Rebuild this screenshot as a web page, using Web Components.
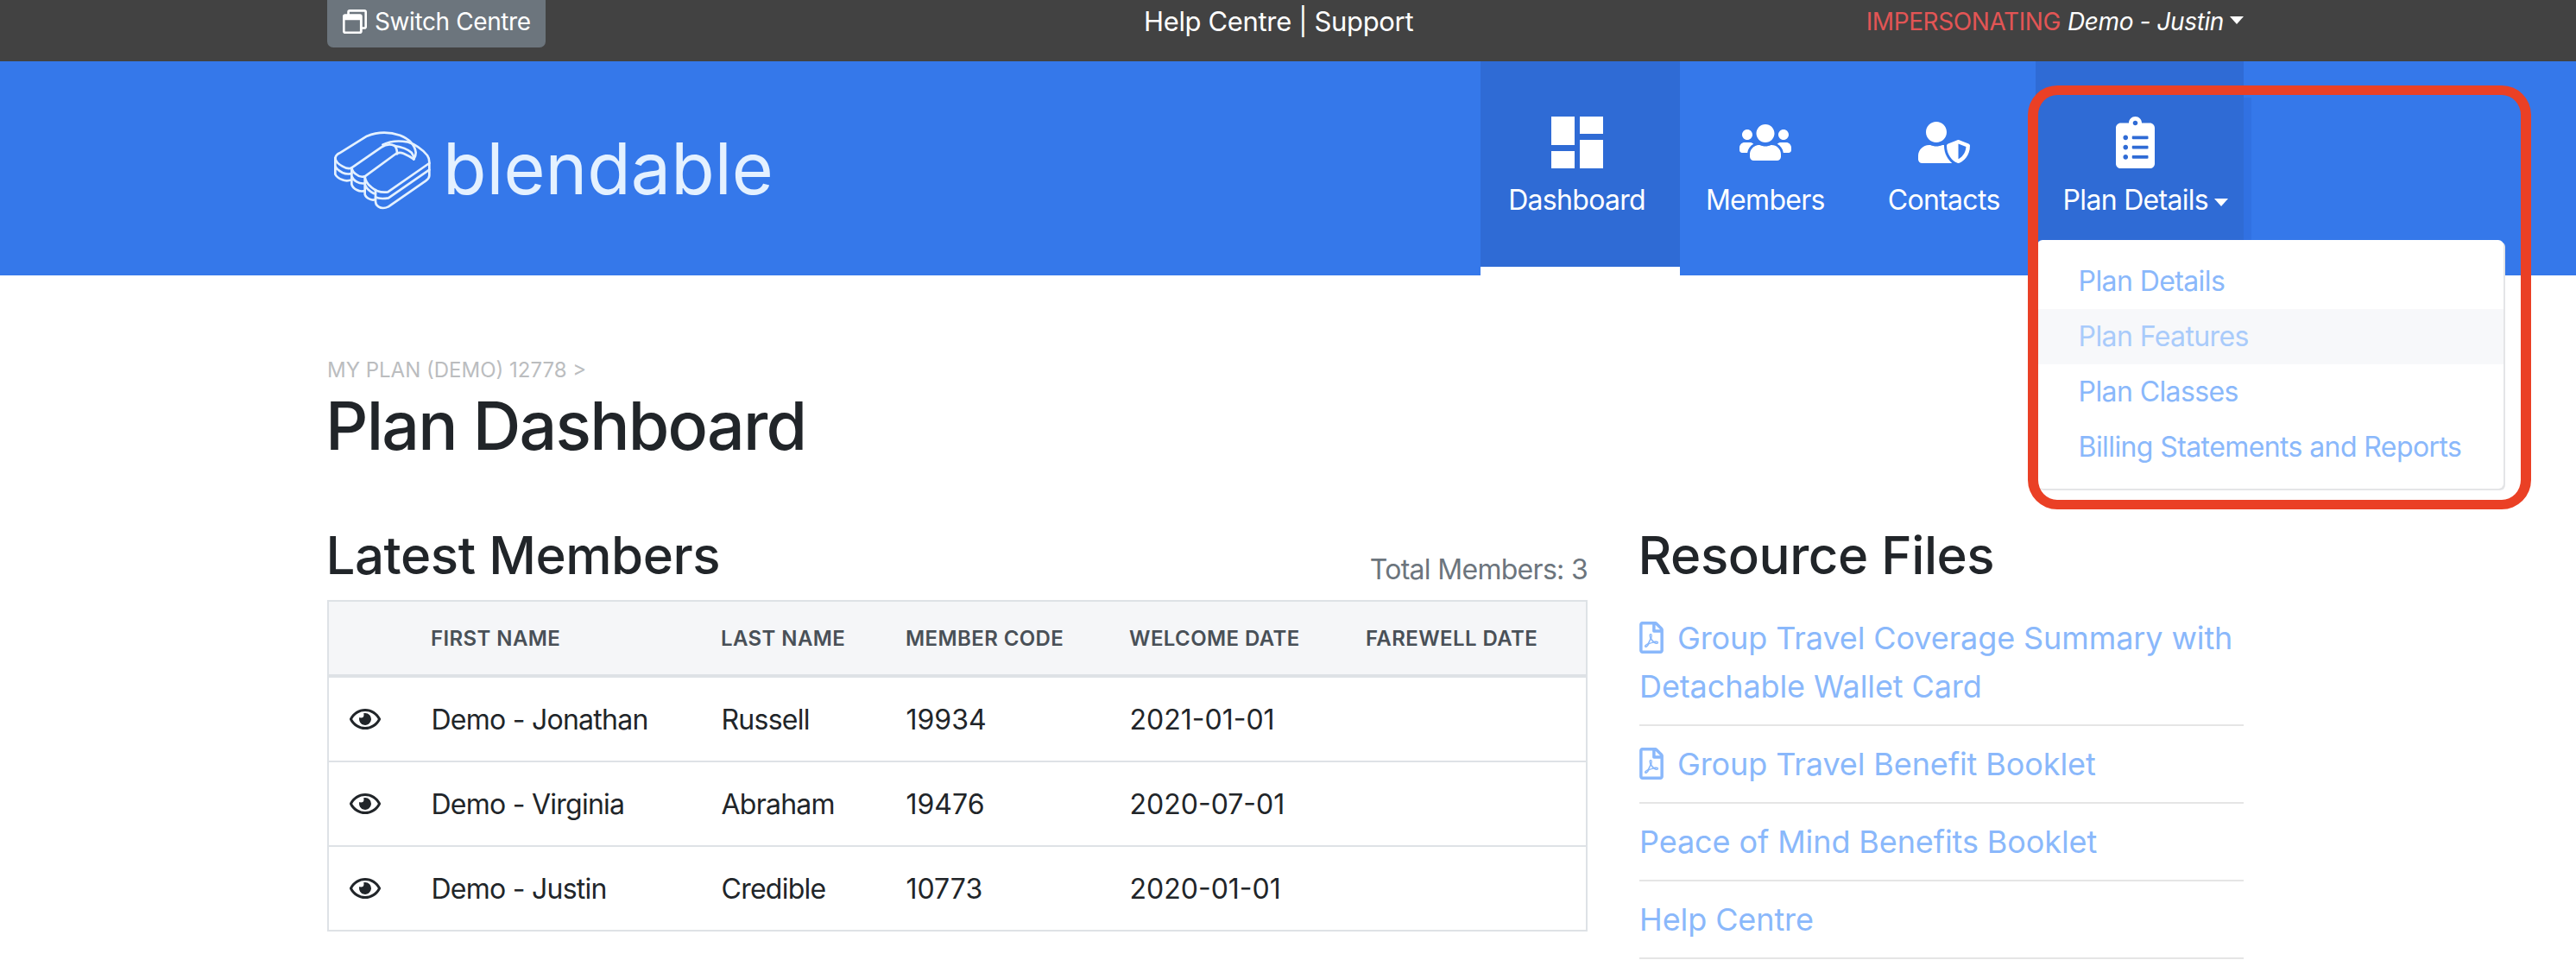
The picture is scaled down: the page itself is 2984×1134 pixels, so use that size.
<!DOCTYPE html>
<html lang="en"><head><meta charset="utf-8"><title>Plan Dashboard</title>
<style>
html,body{margin:0;padding:0;background:#fff}
body{font-family:Inter,"Liberation Sans",sans-serif;font-size:32px;color:#212529;width:2984px;height:1134px;overflow:hidden;position:relative}
</style></head><body>
<app-page>
  <top-bar>
    <switch-button slot="left">Switch Centre</switch-button>
    <span slot="mid">Help Centre | Support</span>
    <user-menu slot="right"></user-menu>
  </top-bar>
  <site-header>
    <brand-logo slot="logo"></brand-logo>
    <nav-item slot="nav" icon="dash" active style="--pl:32px;--pr:40px">Dashboard</nav-item>
    <nav-item slot="nav" icon="users" style="--pl:30px;--pr:32px">Members</nav-item>
    <nav-item slot="nav" icon="usershield" style="--pl:41px;--pr:41px">Contacts</nav-item>
    <nav-item slot="nav" icon="clip" open caret style="--pl:32px;--pr:41px">Plan Details
      <drop-menu slot="menu">
        <drop-item>Plan Details</drop-item>
        <drop-item hover>Plan Features</drop-item>
        <drop-item>Plan Classes</drop-item>
        <drop-item>Billing Statements and Reports</drop-item>
      </drop-menu>
    </nav-item>
  </site-header>
  <page-body>
    <page-title crumb="MY PLAN (DEMO) 12778 &gt;">Plan Dashboard</page-title>
    <two-cols>
      <section-block slot="a" total="Total Members: 3" heading="Latest Members">
        <member-table></member-table>
      </section-block>
      <section-block slot="b" heading="Resource Files">
        <file-item pdf>Group Travel Coverage Summary with Detachable Wallet Card</file-item>
        <file-item pdf>Group Travel Benefit Booklet</file-item>
        <file-item>Peace of Mind Benefits Booklet</file-item>
        <file-item>Help Centre</file-item>
      </section-block>
    </two-cols>
  </page-body>
  <note-ring></note-ring>
</app-page>
<script>
const ICONS={
 pdf:['0 0 384 512','M369.9 97.9L286 14C277 5 264.8-.1 252.1-.1H48C21.5 0 0 21.5 0 48v416c0 26.5 21.5 48 48 48h288c26.5 0 48-21.5 48-48V131.9c0-12.7-5.1-25-14.1-34zM332.1 128H256V51.9l76.1 76.1zM48 464V48h160v104c0 13.3 10.7 24 24 24h104v288H48zm250.2-143.7c-12.2-12-47-8.7-64.4-6.5-17.2-10.5-28.7-25-36.8-46.3 3.9-16.1 10.1-40.6 5.4-56-4.2-26.2-37.8-23.6-42.6-5.9-4.4 16.1-.4 38.5 7 67.1-10 23.9-24.9 56-35.4 74.4-20 10.3-47 26.2-51 46.2-3.3 15.8 26 55.2 76.1-31.2 22.4-7.4 46.8-16.5 68.4-20.1 18.9 10.2 41 17 55.8 17 25.5 0 28-28.2 17.5-38.7zm-198.1 77.8c5.1-13.7 24.5-29.5 30.4-35-19 30.3-30.4 35.7-30.4 35zm81.6-190.6c7.4 0 6.7 32.1 1.8 40.8-4.4-13.9-4.3-40.8-1.8-40.8zm-24.4 136.6c9.7-16.9 18-37 24.7-54.7 8.3 15.1 18.9 27.2 30.1 35.5-20.8 4.3-38.9 13.1-54.8 19.2zm131.6-5s-5 6-37.3-7.8c35.1-2.6 40.9 5.4 37.3 7.8z'],
 users:['0 0 640 512','M96 224c35.3 0 64-28.7 64-64s-28.7-64-64-64-64 28.7-64 64 28.7 64 64 64zm448 0c35.3 0 64-28.7 64-64s-28.7-64-64-64-64 28.7-64 64 28.7 64 64 64zm32 32h-64c-17.6 0-33.5 7.1-45.1 18.6 40.3 22.1 68.9 62 75.1 109.4h66c17.7 0 32-14.3 32-32v-32c0-35.3-28.7-64-64-64zm-256 0c61.9 0 112-50.1 112-112S381.9 32 320 32 208 82.1 208 144s50.1 112 112 112zm76.8 32h-8.3c-20.8 10-43.9 16-68.5 16s-47.6-6-68.5-16h-8.3C179.6 288 128 339.6 128 403.2V432c0 26.5 21.5 48 48 48h288c26.5 0 48-21.5 48-48v-28.8c0-63.6-51.6-115.2-115.2-115.2zm-223.7-13.4C161.5 263.1 145.6 256 128 256H64c-35.3 0-64 28.7-64 64v32c0 17.7 14.3 32 32 32h65.9c6.3-47.4 34.9-87.3 75.2-109.4z'],
 usershield:['0 0 640 512','M622.3 271.1l-115.2-45c-4.1-1.6-12.6-3.7-22.2 0l-115.2 45c-10.7 4.2-17.7 14-17.7 24.9 0 111.6 68.7 188.8 132.9 213.9 9.6 3.7 18 1.6 22.2 0C558.4 489.9 640 420.5 640 296c0-10.9-7-20.7-17.7-24.9zM496 462.4V273.3l95.5 37.3c-5.6 87.1-60.9 135.4-95.5 151.8zM224 256c70.7 0 128-57.3 128-128S294.7 0 224 0 96 57.3 96 128s57.3 128 128 128zm96 40c0-2.5.8-4.7 1.1-7.2-2.5-.1-4.9-.8-7.5-.8h-16.7c-22.2 10.2-46.9 16-72.9 16s-50.6-5.8-72.9-16h-16.7C60.2 288 0 348.2 0 422.4V464c0 26.5 21.5 48 48 48h352c6.2 0 12.1-1.3 17.5-3.4C369.9 470.3 320 393.6 320 296z'],
 clip:['0 0 384 512','M336 64h-80c0-35.3-28.7-64-64-64s-64 28.7-64 64H48C21.5 64 0 85.5 0 112v352c0 26.5 21.5 48 48 48h288c26.5 0 48-21.5 48-48V112c0-26.5-21.5-48-48-48zM96 424c-13.3 0-24-10.7-24-24s10.7-24 24-24 24 10.7 24 24-10.7 24-24 24zm0-96c-13.3 0-24-10.7-24-24s10.7-24 24-24 24 10.7 24 24-10.7 24-24 24zm0-96c-13.3 0-24-10.7-24-24s10.7-24 24-24 24 10.7 24 24-10.7 24-24 24zm96-192c13.3 0 24 10.7 24 24s-10.7 24-24 24-24-10.7-24-24 10.7-24 24-24zm128 368c0 4.4-3.6 8-8 8H168c-4.4 0-8-3.6-8-8v-16c0-4.4 3.6-8 8-8h144c4.4 0 8 3.6 8 8v16zm0-96c0 4.4-3.6 8-8 8H168c-4.4 0-8-3.6-8-8v-16c0-4.4 3.6-8 8-8h144c4.4 0 8 3.6 8 8v16zm0-96c0 4.4-3.6 8-8 8H168c-4.4 0-8-3.6-8-8v-16c0-4.4 3.6-8 8-8h144c4.4 0 8 3.6 8 8v16z'],
 dash:['0 0 60 60','M0 0h27v33H0zM33 0h27v20H33zM33 27h27v33H33zM0 40h27v20H0z'],
 eye:['0 0 576 512','M288 144a110.94 110.94 0 0 0-31.24 5 55.4 55.4 0 0 1 7.24 27 56 56 0 0 1-56 56 55.4 55.4 0 0 1-27-7.24A111.71 111.71 0 1 0 288 144zm284.52 97.4C518.29 135.59 410.93 64 288 64S57.68 135.64 3.48 241.41a32.35 32.35 0 0 0 0 29.19C57.71 376.41 165.07 448 288 448s230.32-71.64 284.52-177.41a32.35 32.35 0 0 0 0-29.19zM288 400c-98.65 0-189.09-55-237.93-144C98.91 167 189.34 112 288 112s189.09 55 237.93 144C477.1 345 386.66 400 288 400z'],
 win:['0 0 512 512','M464 0H144c-26.5 0-48 21.5-48 48v48H48c-26.5 0-48 21.5-48 48v320c0 26.5 21.5 48 48 48h320c26.5 0 48-21.5 48-48v-48h48c26.5 0 48-21.5 48-48V48c0-26.5-21.5-48-48-48zM362 464H54c-3.3 0-6-2.7-6-6V224h316v234c0 3.3-2.7 6-6 6zm102-96h-48V144c0-26.5-21.5-48-48-48H144V54c0-3.3 2.7-6 6-6h308c3.3 0 6 2.7 6 6v314z']
};
function svg(n,w,h,extra=''){const [v,d]=ICONS[n];return `<svg xmlns="http://www.w3.org/2000/svg" width="${w}" height="${h}" viewBox="${v}" fill="currentColor" style="display:block;${extra}"><path d="${d}"/></svg>`}
function def(name,html){customElements.define(name,class extends HTMLElement{constructor(){super();this.attachShadow({mode:'open'});if(typeof html!=='function')this.shadowRoot.innerHTML=html}
 connectedCallback(){if(typeof html==='function')this.shadowRoot.innerHTML=html(this)}})}

def('app-page',`<style>:host{display:block;position:relative;width:2984px;height:1134px;overflow:hidden}</style><slot></slot>`);

def('top-bar',`<style>
:host{display:block;background:#424242;height:71px;color:#fff}
.c{display:grid;grid-template-columns:946px 312px 1fr;margin-left:379px;width:2220px;height:71px}
.m{display:block;line-height:50px;white-space:nowrap;font-size:31px;letter-spacing:-.35px}
.r{justify-self:end}
</style><div class="c"><div><slot name="left"></slot></div><div class="m"><slot name="mid"></slot></div><div class="r"><slot name="right"></slot></div></div>`);

def('switch-button',`<style>
:host{display:inline-flex;align-items:center;gap:9px;box-sizing:border-box;width:253px;height:55px;padding:0 0 5px 18px;background:#6c757d;color:#fff;border-radius:0 0 7px 7px;font-size:28px;letter-spacing:-.4px;white-space:nowrap}
</style>${svg('win',28,28)}<span><slot></slot></span>`);

def('user-menu',`<style>
:host{display:flex;align-items:center;height:50px;font-size:28px;letter-spacing:-.4px;white-space:nowrap;color:#fff}
.i{color:#e25555}
em{font-style:italic;margin-left:8px}
.car{width:0;height:0;border:8px solid transparent;border-top:9px solid #fff;border-bottom:0;margin-left:7px;margin-top:-4px}
</style><span class="i">IMPERSONATING</span><em>Demo - Justin</em><span class="car"></span>`);

def('site-header',`<style>
:host{display:block;background:#3578ea;height:248px}
.c{display:flex;justify-content:space-between;margin-left:379px;width:2220px;height:248px}
nav{display:flex;align-items:stretch}
</style><div class="c"><slot name="logo"></slot><nav><slot name="nav"></slot></nav></div>`);

def('brand-logo',`<style>
:host{display:flex;align-items:flex-start;padding-top:74px;color:#e4f1ff}
svg{margin-left:1px;display:block;overflow:visible;flex:none}
span{font-size:82.5px;font-weight:400;line-height:100px;margin-left:3px}
</style>
<svg width="130" height="105" viewBox="0 0 390 315" fill="none" stroke="currentColor" stroke-width="8" stroke-linecap="round" stroke-linejoin="round">
<path d="M25 115Q27 103 40 97L135 38Q190 15 250 35Q300 55 305 95Q305 108 298 118"/>
<path d="M190 68Q225 50 275 58Q315 70 345 105Q352 115 352 128V175Q352 185 340 193L210 283Q190 293 175 283Q165 277 165 265V225"/>
<path d="M25 115Q27 130 50 143Q70 155 82 148L185 77Q210 60 232 72Q240 80 240 100"/>
<path d="M232 72Q270 78 290 95Q298 105 298 118"/>
<path d="M82 148Q85 165 100 172Q110 182 128 178L232 102Q245 92 262 98Q285 108 298 118"/>
<path d="M128 178Q130 200 150 215Q175 237 208 232L352 132"/>
<path d="M165 250Q180 258 210 253L352 155"/>
<path d="M25 115V170Q30 182 50 190Q65 196 82 190M25 142Q30 155 50 165Q65 172 82 168"/>
<path d="M82 148V205Q85 218 100 225Q112 232 128 228M82 175Q85 188 100 197Q112 204 128 202"/>
<path d="M128 178V240Q130 250 145 257Q155 262 165 258M128 205Q132 220 150 232Q158 238 165 238"/>
</svg><span>blendable</span>`);

def('nav-item',h=>{const open=h.hasAttribute('open'),act=h.hasAttribute('active');
 const n=h.getAttribute('icon');const size={dash:[60,60],users:[60,48],usershield:[60,48],clip:[45,60]}[n];
 return `<style>
:host{display:block;position:relative;box-sizing:border-box;padding:0 var(--pr) 0 var(--pl);color:#fff;${act?'background:#2f6bd5;border-bottom:10px solid #fff;':''}${open?'background:#2f6bd5;':''}}
.in{display:flex;flex-direction:column;align-items:center;padding-top:64px}
.ic{height:60px;display:flex;align-items:center;justify-content:center}
.l{margin-top:18px;line-height:38px;font-size:32px;letter-spacing:-.7px;white-space:nowrap;position:relative}
.car{position:absolute;left:100%;top:17px;margin-left:7px;width:0;height:0;border:8px solid transparent;border-top:9px solid #fff;border-bottom:0}
</style><div class="in"><div class="ic">${svg(n,size[0],size[1])}</div><div class="l"><slot></slot>${h.hasAttribute('caret')?'<span class="car"></span>':''}</div></div><slot name="menu"></slot>`});

def('drop-menu',`<style>
:host{display:block;position:absolute;left:2px;top:207px;width:540px;box-sizing:border-box;padding:16px 0;background:#fff;border-radius:6px;box-shadow:2px 2px 0 #e4e5e7;z-index:3}
</style><slot></slot>`);
def('drop-item',h=>`<style>
:host{display:block;height:64px;line-height:64px;padding-left:48px;font-size:32px;letter-spacing:-.6px;color:${h.hasAttribute('hover')?'#a9cbfb':'#8ab8fb'};${h.hasAttribute('hover')?'background:#f7f8fa;':''}white-space:nowrap}
</style><slot></slot>`);

def('page-body',`<style>:host{display:block;margin-left:379px;width:2220px;padding-top:92px}</style><slot></slot>`);
def('page-title',h=>`<style>
:host{display:block}
.b{font-size:24px;line-height:36px;color:#bbbdbf;white-space:nowrap}
h1{margin:0 0 0 -2px;font-size:77px;line-height:92px;font-weight:500;letter-spacing:-1.75px;color:#212529}
</style><div class="b">${h.getAttribute('crumb').replace('>','&gt;')}</div><h1><slot></slot></h1>`);
def('two-cols',`<style>:host{display:grid;grid-template-columns:1460px 700px;column-gap:60px;margin-top:68px}::slotted(*){min-width:0}</style><slot name="a"></slot><slot name="b"></slot>`);
def('section-block',h=>`<style>
:host{display:block}
.h{display:flex;justify-content:space-between;height:88px}
h3{margin:0 0 0 -1.5px;font-size:60px;line-height:72px;font-weight:500;letter-spacing:-.45px;color:#212529;white-space:nowrap}
.t{align-self:flex-end;padding-bottom:11px;line-height:48px;font-size:32px;letter-spacing:-.7px;color:#6c757d;white-space:nowrap}
</style><div class="h"><h3>${h.getAttribute('heading')}</h3>${h.getAttribute('total')?`<div class="t">${h.getAttribute('total')}</div>`:''}</div><slot></slot>`);

const rows=[['Demo - Jonathan','Russell','19934','2021-01-01'],['Demo - Virginia','Abraham','19476','2020-07-01'],['Demo - Justin','Credible','10773','2020-01-01']];
def('member-table',`<style>
:host{display:block;width:1460px}
table{width:100%;table-layout:fixed;border-collapse:separate;border-spacing:0;border:2px solid #dee2e6;border-bottom:0;font-size:32px}
th{height:84px;padding:0 0 0 23px;background:#f5f6f8;border-bottom:4px solid #dee2e6;font-size:24px;font-weight:600;letter-spacing:.4px;color:#495057;text-align:left;white-space:nowrap;text-transform:uppercase}
td{height:96px;padding:0 0 0 23.5px;border-bottom:2px solid #dee2e6;color:#212529;white-space:nowrap}
td.n{letter-spacing:-.75px}
svg{display:block}
</style><table><colgroup><col style="width:95px"><col style="width:336px"><col style="width:214px"><col style="width:259px"><col style="width:274px"><col></colgroup>
<thead><tr><th></th><th>First Name</th><th>Last Name</th><th>Member Code</th><th>Welcome Date</th><th>Farewell Date</th></tr></thead>
<tbody>${rows.map(r=>`<tr><td>${svg('eye',36,32)}</td><td class="n">${r[0]}</td><td class="n">${r[1]}</td><td>${r[2]}</td><td>${r[3]}</td><td></td></tr>`).join('')}</tbody></table>`);

def('file-item',h=>`<style>
:host{display:block;padding:16px 0;border-bottom:2px solid #e5e5e5;font-size:36px;line-height:56px;letter-spacing:-.1px;color:#8ab8fb}
svg{display:inline-block!important;vertical-align:-5px;margin-right:16px}
</style>${h.hasAttribute('pdf')?svg('pdf',28,37):''}<slot></slot>`);

def('note-ring',`<style>
:host{display:block;position:absolute;left:2349px;top:99px;width:583px;height:491px;box-sizing:border-box;border:solid #ea4025;border-width:11px 12px;border-radius:34px;z-index:5;pointer-events:none}
.s{position:absolute;left:238px;top:3px;width:9px;height:165px;background:#3171e2}
</style><div class="s"></div>`);
</script>
</body></html>
